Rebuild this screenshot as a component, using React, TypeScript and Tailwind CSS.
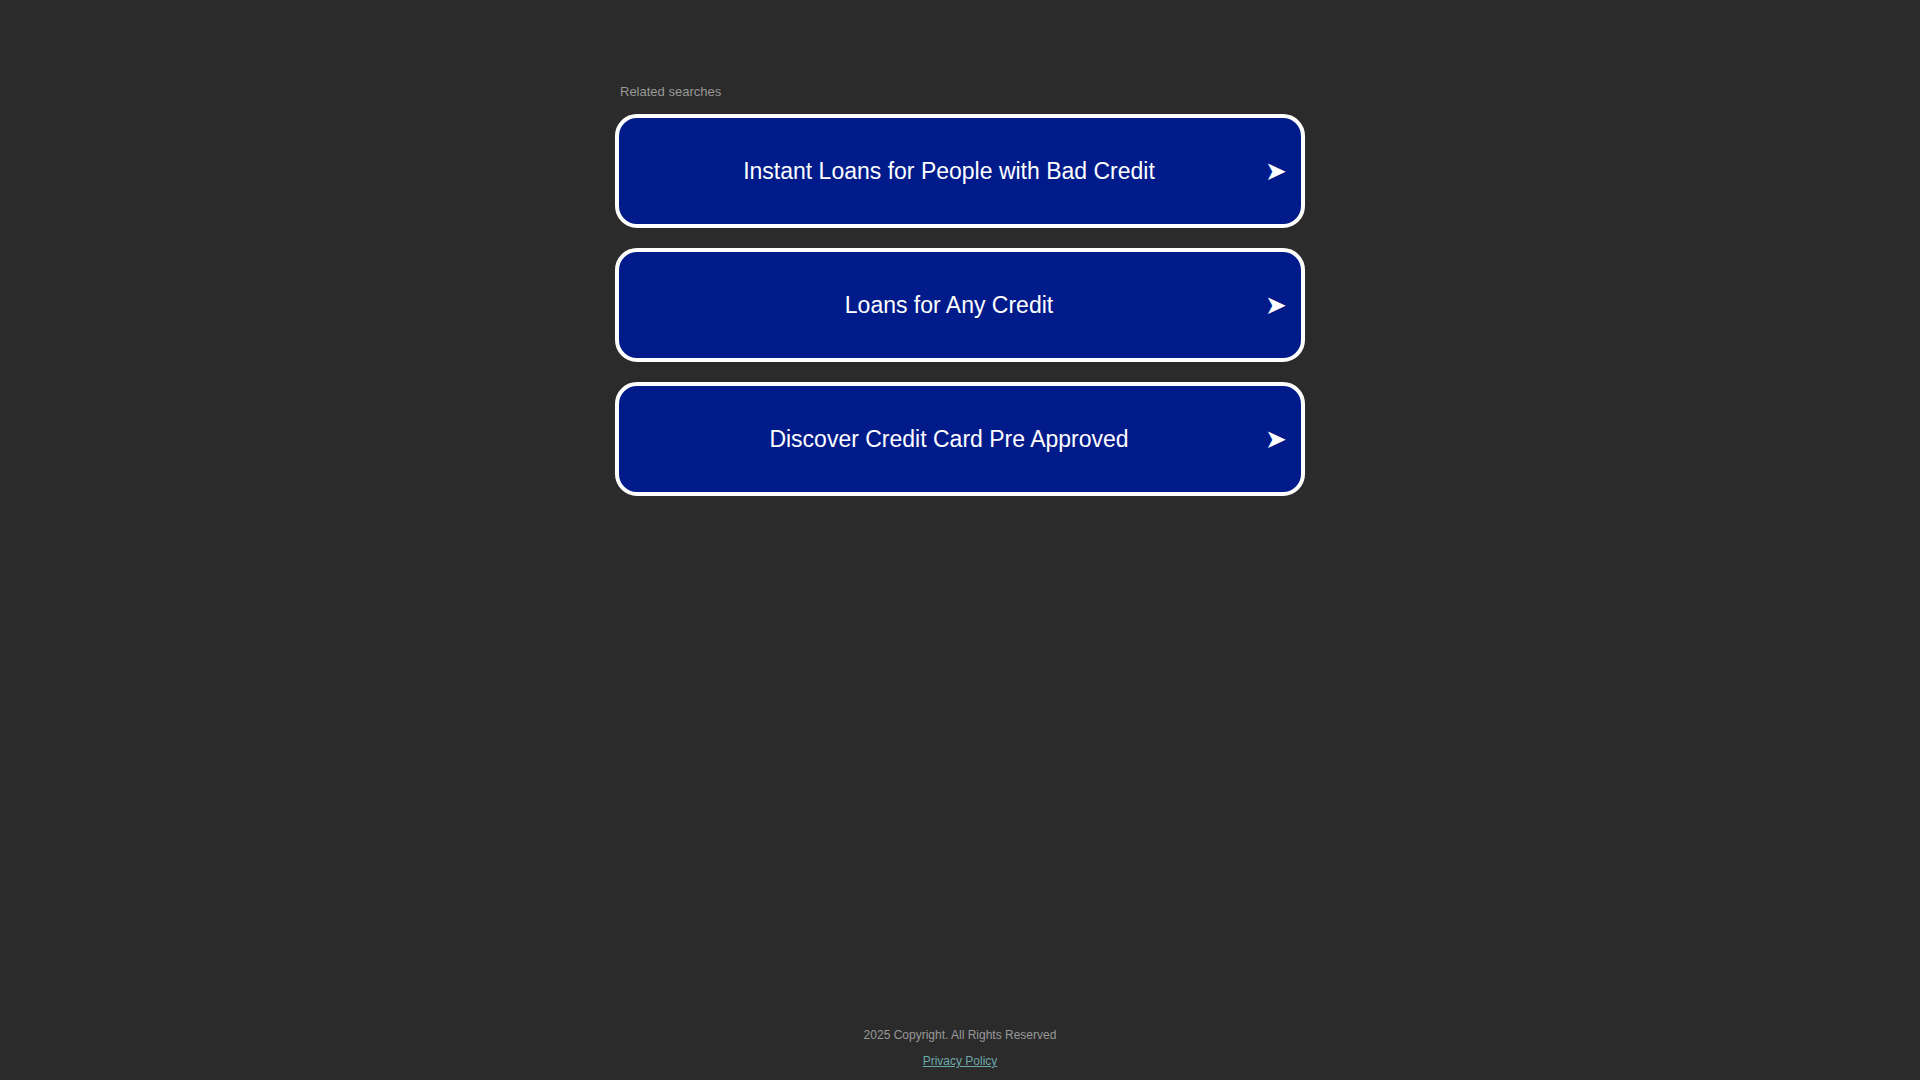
import React from 'react';

const searches = [
  'Instant Loans for People with Bad Credit',
  'Loans for Any Credit',
  'Discover Credit Card Pre Approved',
];

export default function App() {
  return (
    <div
      className="min-h-screen flex flex-col bg-[#2b2b2b]"
      style={{ fontFamily: '"Liberation Sans", Arial, sans-serif' }}
    >
      <main className="flex-1 flex justify-center pt-[84px]">
        <div className="w-[690px] flex flex-col">
          <p className="pl-[5px] text-[13px] leading-[16px] text-[#999999] mb-[14px]">Related searches</p>
          <div className="flex flex-col gap-[20px]">
            {searches.map((s) => (
              <a
                key={s}
                href="#"
                className="relative flex items-center justify-center h-[114px] rounded-[22px] border-[4px] border-white bg-[#011b8a] pr-[22px]"
              >
                <span className="text-[23px] text-white">{s}</span>
                <span className="absolute right-[14px] top-1/2 -translate-y-1/2 text-[26px] leading-none text-white">➤</span>
              </a>
            ))}
          </div>
        </div>
      </main>
      <footer className="flex flex-col items-center pb-[11px]">
        <p className="text-[12px] leading-[16px] text-[#999999]">2025 Copyright. All Rights Reserved</p>
        <a href="#" className="mt-[10px] text-[12px] leading-[16px] text-[#6ca8a8] underline">Privacy Policy</a>
      </footer>
    </div>
  );
}
